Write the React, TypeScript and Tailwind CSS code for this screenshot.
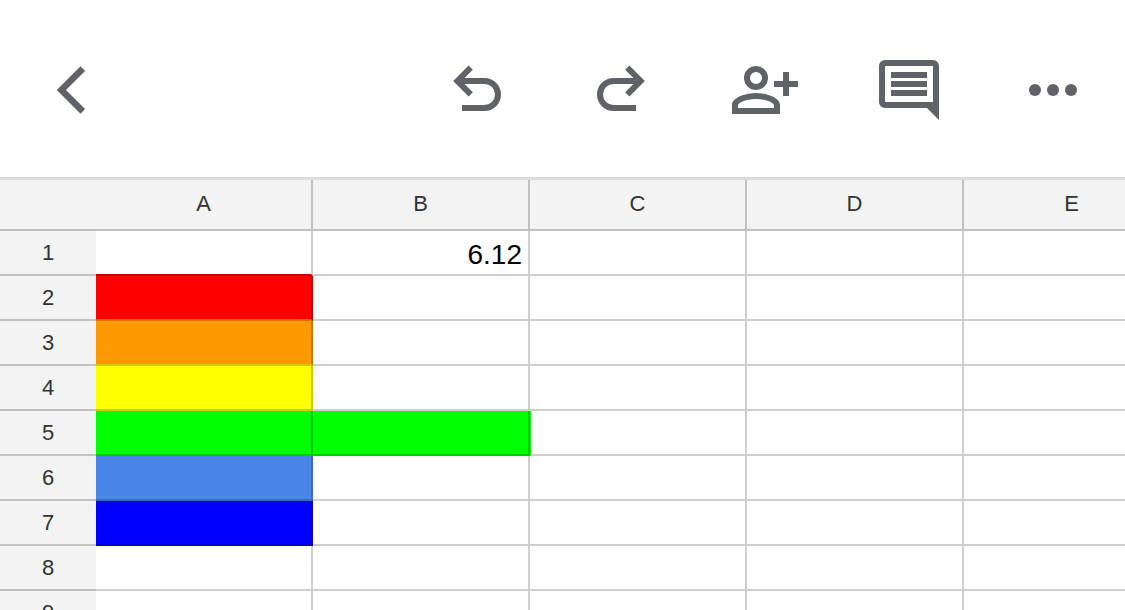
import { ReactNode } from "react";

type Cell = {
  text?: string;
  className?: string;
};

const columns = ["A", "B", "C", "D", "E"];
const rows = [1, 2, 3, 4, 5, 6, 7, 8, 9];

const plain = "bg-white border-[#cecece]";

const cells: Record<string, Cell> = {
  A1: { className: "bg-white border-b-[#c80000] border-r-[#cecece]" },
  B1: { text: "6.12" },
  A2: { className: "bg-[#ff0000] border-r-[#c80000] border-b-[#cc7a00]" },
  A3: { className: "bg-[#ff9900] border-r-[#cc7a00] border-b-[#cccc00]" },
  A4: { className: "bg-[#ffff00] border-r-[#cccc00] border-b-[#cccc00]" },
  A5: { className: "bg-[#00ff00] border-[#00cc00]" },
  B5: { className: "relative bg-[#00ff00] border-[#00cc00] shadow-[1px_0_0_#00ff00]" },
  A6: { className: "bg-[#4a86e8] border-[#3b6bba]" },
  A7: { className: "bg-[#0000ff] border-[#0000c8]" },
};

const ToolButton = ({ label, children }: { label: string; children: ReactNode }) => {
  return (
    <button type="button" aria-label={label} className="shrink-0 text-[#5f6368]">
      <svg className="block size-18" viewBox="0 0 72 72" fill="none" stroke="currentColor" strokeWidth="6">
        {children}
      </svg>
    </button>
  );
};

const Toolbar = () => {
  return (
    <header className="flex shrink-0 items-center justify-between border-b-3 border-[#dadce0] bg-white px-9 pt-[54px] pb-[51px]">
      <ToolButton label="Back">
        <path d="M46.8 14.6 25.400 36l21.400 21.400" strokeWidth="6.5" />
      </ToolButton>
      <div className="flex items-center gap-18">
        <ToolButton label="Undo">
          <path d="M17 27h26.5a13.5 13.5 0 0 1 0 27H21" />
          <path d="M29.700 13.700 16.400 27l13.300 13.300" />
        </ToolButton>
        <ToolButton label="Redo">
          <path d="M55 27H28.500a13.500 13.500 0 0 0 0 27H51" />
          <path d="M42.300 13.700 55.600 27 42.300 40.300" />
        </ToolButton>
        <ToolButton label="Share">
          <circle cx="27" cy="24" r="9" />
          <path
            d="M3 60V51C3 43 18 39 27 39s24 4 24 12v9zM9 54h36v-3c0-2-8-6-18-6S9 49 9 51z"
            fill="currentColor"
            fillRule="evenodd"
            stroke="none"
          />
          <path d="M57 18v24M45 30h24" />
        </ToolButton>
        <ToolButton label="Comments">
          <path
            d="M12 6h48a6 6 0 0 1 6 6v54L54 54H12a6 6 0 0 1-6-6V12a6 6 0 0 1 6-6zM12 12v36h48V12z"
            fill="currentColor"
            fillRule="evenodd"
            stroke="none"
          />
          <path d="M18 21h36M18 30h36M18 39h36" />
        </ToolButton>
        <ToolButton label="More">
          <g fill="currentColor" stroke="none">
            <circle cx="18" cy="36" r="6" />
            <circle cx="36" cy="36" r="6" />
            <circle cx="54" cy="36" r="6" />
          </g>
        </ToolButton>
      </div>
    </header>
  );
};

const Sheet = () => {
  return (
    <div className="min-h-0 flex-1 overflow-hidden">
      <table className="w-max table-fixed border-separate border-spacing-0">
        <thead>
          <tr className="h-[51px] bg-[#f3f3f3] text-[22px] leading-6 text-[#333333]">
            <td className="w-24 min-w-24 border-b-2 border-[#c0c0c0] p-0" />
            {columns.map((name) => (
              <th
                key={name}
                scope="col"
                className="w-[217px] min-w-[217px] border-r-2 border-b-2 border-[#c0c0c0] p-0 pb-0.5 font-normal"
              >
                {name}
              </th>
            ))}
          </tr>
        </thead>
        <tbody>
          {rows.map((row) => (
            <tr key={row} className="h-[45px]">
              <th
                scope="row"
                className="border-b-2 border-[#c0c0c0] bg-[#f3f3f3] p-0 text-[22px] leading-6 font-normal text-[#333333]"
              >
                {row}
              </th>
              {columns.map((name) => {
                const cell = cells[name + row];
                return (
                  <td
                    key={name}
                    className={`border-r-2 border-b-2 p-0 pt-1 pr-1.5 text-right text-[28px] leading-8 text-black ${
                      cell?.className ?? plain
                    }`}
                  >
                    {cell?.text}
                  </td>
                );
              })}
            </tr>
          ))}
        </tbody>
      </table>
    </div>
  );
};

const App = () => {
  return (
    <div className="flex h-screen flex-col overflow-hidden bg-white font-['Liberation_Sans',Arial,sans-serif]">
      <Toolbar />
      <Sheet />
    </div>
  );
};

export default App;
